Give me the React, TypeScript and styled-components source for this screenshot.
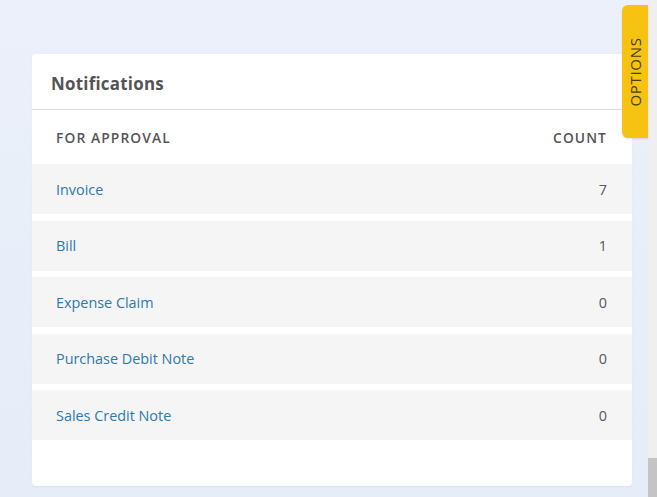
import React from "react";
import styled, { createGlobalStyle } from "styled-components";

const GlobalStyle = createGlobalStyle`
  html, body { margin: 0; padding: 0; height: 100%; }
  body {
    background: #e9eff9;
    font-family: "Open Sans", "Noto Sans", sans-serif;
    overflow: hidden;
  }
`;

const Shell = styled.div`
  position: relative;
  display: flex;
  width: 657px;
  height: 497px;
  background: linear-gradient(180deg, #ebf0fa 0%, #e6edf8 100%);
`;

const Main = styled.div`
  flex: 1;
  padding: 54px 16px 11px 32px;
`;

const Card = styled.section`
  height: 432px;
  background: #ffffff;
  border-radius: 4px;
  box-shadow: 0 1px 2px rgba(60, 80, 120, 0.06);
  display: flex;
  flex-direction: column;
`;

const CardHeader = styled.header`
  height: 56px;
  display: flex;
  align-items: center;
  padding: 3px 19px 0;
  border-bottom: 1px solid #dcdcdc;
  box-sizing: border-box;
`;

const Title = styled.h2`
  margin: 0;
  font-size: 16.9px;
  font-weight: 700;
  color: #545454;
  letter-spacing: 0.25px;
`;

const ColumnHead = styled.div`
  height: 54px;
  display: flex;
  align-items: center;
  justify-content: space-between;
  padding: 0 25px 0 24px;
  font-size: 13.8px;
  font-weight: 600;
  letter-spacing: 1.1px;
  color: #555555;
`;

const Rows = styled.div`
  display: flex;
  flex-direction: column;
  gap: 6.5px;
`;

const Row = styled.div`
  height: 50px;
  display: flex;
  align-items: center;
  justify-content: space-between;
  padding: 0 25px 0 24px;
  background: #f5f5f5;
  font-size: 14.4px;
`;

const DocLink = styled.a`
  color: #2e79ad;
  text-decoration: none;
`;

const Count = styled.span`
  color: #585858;
`;

const ScrollTrack = styled.div`
  width: 9px;
  background: #efefef;
  display: flex;
  flex-direction: column;
  justify-content: flex-end;
`;

const ScrollThumb = styled.div`
  height: 39px;
  background: #c4c4c4;
`;

const OptionsTab = styled.button`
  position: absolute;
  top: 5px;
  right: 9px;
  width: 26px;
  height: 133px;
  border: none;
  padding: 0;
  background: #f7c312;
  border-radius: 6px 0 0 6px;
  box-shadow: 0 1px 2px rgba(0, 0, 0, 0.12);
  display: flex;
  align-items: center;
  justify-content: center;
  cursor: pointer;
`;

const OptionsLabel = styled.span`
  display: block;
  transform: rotate(-90deg);
  white-space: nowrap;
  font-family: "Open Sans", "Noto Sans", sans-serif;
  font-size: 15px;
  letter-spacing: 0.7px;
  color: #4a3e14;
`;

const items = [
  { name: "Invoice", count: 7 },
  { name: "Bill", count: 1 },
  { name: "Expense Claim", count: 0 },
  { name: "Purchase Debit Note", count: 0 },
  { name: "Sales Credit Note", count: 0 },
];

export default function App() {
  return (
    <>
      <GlobalStyle />
      <Shell>
        <Main>
          <Card>
            <CardHeader>
              <Title>Notifications</Title>
            </CardHeader>
            <ColumnHead>
              <span>FOR APPROVAL</span>
              <span>COUNT</span>
            </ColumnHead>
            <Rows>
              {items.map((it) => (
                <Row key={it.name}>
                  <DocLink href="#">{it.name}</DocLink>
                  <Count>{it.count}</Count>
                </Row>
              ))}
            </Rows>
          </Card>
        </Main>
        <ScrollTrack>
          <ScrollThumb />
        </ScrollTrack>
        <OptionsTab>
          <OptionsLabel>OPTIONS</OptionsLabel>
        </OptionsTab>
      </Shell>
    </>
  );
}
